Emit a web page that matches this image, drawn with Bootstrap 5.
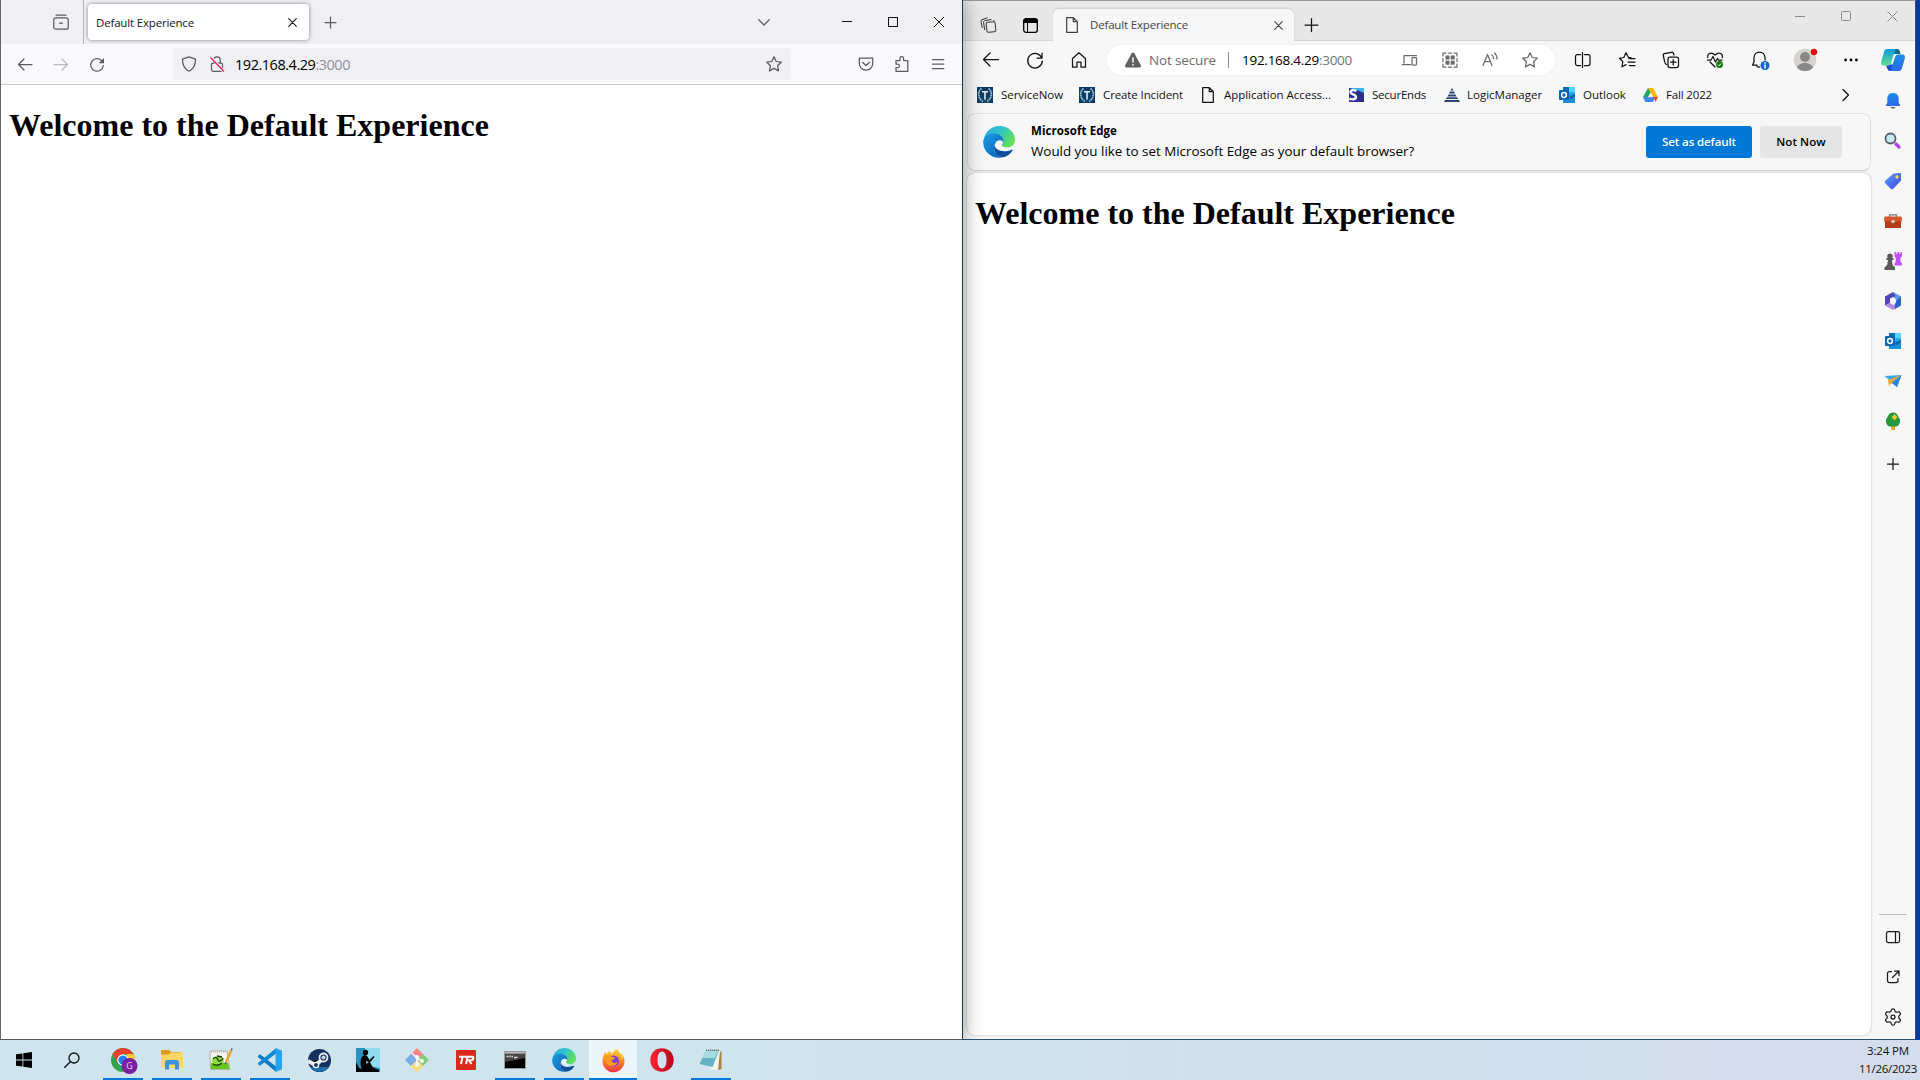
<!DOCTYPE html>
<html lang="en">
<head>
<meta charset="utf-8">
<title>Desktop</title>
<link href="https://cdn.jsdelivr.net/npm/bootstrap@5.3.0/dist/css/bootstrap.min.css" rel="stylesheet">
<style>
body{width:1920px;height:1080px;overflow:hidden;background:#0839a0;font-family:"Open Sans","Noto Sans",sans-serif;font-size:11.5px;line-height:16px;color:#111}
svg{display:block;flex:none;overflow:visible}
.ln{fill:none;stroke:currentColor;stroke-width:1.25;stroke-linecap:round;stroke-linejoin:round}
.tx{white-space:nowrap;flex:none}
.pic{width:16px;height:16px;flex:none}
.desk{height:1040px}
.doc-h{font:bold 32px/37px "Liberation Serif",serif;margin:22px 8px;color:#000;white-space:nowrap}
.t1{letter-spacing:-.172px}
.t2{letter-spacing:-.472px}
.t3{letter-spacing:-.147px}
.t4{letter-spacing:-.268px}
/* Firefox */
.fx{width:963px;border:1px solid #1f3a4d;border-left-color:#666;border-bottom-color:#555;border-top:0;background:#fff;position:relative;z-index:2;box-shadow:0 0 20px rgba(0,0,0,.4);color:#5b5b66}
.fx-tabs{height:44px;background:#f0eff4}
.fx-view{width:82px;padding:14px 0 0 52px}
.fx-sep{width:1px;height:44px;background:#b8b7bd}
.fx-tab{width:221px;height:36px;margin-left:4px;padding:1px 12px 0 8px;border-radius:4px;background:#fff;box-shadow:0 0 4px rgba(0,0,0,.45);color:#15141a}
.fx-new{margin-left:13px}
.fx-ctl{margin-left:auto;padding-right:18px;color:#15141a}
.fx-ctl .fx-list{margin:0 72px 0 0;color:#5b5b66}
.fx-bar{height:41px;background:#f9f9fb;border-bottom:1px solid #c9c9ce;padding:0 16px}
.fx-nav{gap:20px;width:156px}
.fx-url{width:617px;height:32px;background:#f0eff4;border-radius:4px;padding:0 8px;font-size:14.5px}
.fx-url .tx{padding-top:2px}
.fx-end{gap:20px;margin-left:auto}
.fade-fx{color:#8f8f98}
/* Edge */
.eg{width:953px;background:#f7f7f7;border-top:1px solid #999;border-right:1px solid #34506e;border-bottom:1px solid #2c5274}
.eg-tabs{height:40px;background:#e8e8e8;border-bottom:1px solid #d6d6d6}
.eg-tab{width:241px;height:32px;margin:8px 0 -1px 15px;padding:0 11px 0 13px;background:#f7f7f7;border-radius:6px 6px 0 0;box-shadow:0 -1px 2px rgba(0,0,0,.12);color:#444}
.eg-tab .tx{margin-left:12px}
.eg-lead{padding-left:17px;gap:26px;margin-top:8px;height:32px}
.eg-ctl{margin-left:auto;gap:36px;padding-right:17px;height:30px;color:#8a8a8a}
.eg-bar{height:38px}
.eg-nav{gap:28px;padding-left:20px;width:144px}
.eg-pill{width:448px;height:30px;border-radius:15px;background:#fff;padding:0 17px 0 18px;box-shadow:0 0 3px rgba(0,0,0,.06);color:#6b6b6b;font-size:13.5px}
.eg-pill .rule{width:1px;height:16px;background:#8a8a8a;margin:0 13px 0 12px}
.eg-acts{gap:28px;padding-left:20px}
.eg-me{margin:0 -1px 0 -4px}
.eg-marks{height:34px;padding:0 0 2px 14px}
.eg-marks .tx{margin-left:8px}
.b1{width:62px;letter-spacing:-.058px}
.b2{width:80px;letter-spacing:-.111px}
.eg-marks .b3{width:107px;letter-spacing:-.037px;margin-left:10px}
.b4{width:54px;letter-spacing:-.22px}
.eg-marks .b5{width:75px;margin-left:7px}
.b6{width:43px}
.b7{width:46px;letter-spacing:-.158px}
.m1{margin-left:16px}.m2{margin-left:19px}.m3,.m4{margin-left:18px}.m5,.m6{margin-left:17px}.m7{margin-left:130px}
.eg-body{width:904px;margin-left:4px}
.eg-ask{height:58px;width:904px;border:1px solid #e2e2e2;border-bottom-color:#d2d2d2;border-radius:8px;padding:0 28px 0 15px;box-shadow:0 1px 1px rgba(0,0,0,.05);color:#000}
.eg-q{margin:0 0 2px 16px;line-height:20px}
.q1{letter-spacing:.079px}
.q2{font-size:13.4px;letter-spacing:-.01px}
.eg-ask .btn{height:32px;border:0;border-radius:3px;padding:0;font-size:11.5px;font-weight:600;line-height:32px;display:flex;justify-content:center}
.btn-def,.btn-def:hover{width:106px;background:#0078d7;color:#fff;letter-spacing:-.1px}
.btn-no,.btn-no:hover{width:82px;background:#e5e5e5;color:#000;margin-left:8px;letter-spacing:.1px}
.eg-doc{height:862px;margin-top:2px;background:#fff;border-radius:8px;box-shadow:0 0 2px rgba(0,0,0,.3)}
.eg-side{width:43px;color:#1b1b1b}
.eg-side>svg{margin-bottom:16px}
.eg-side .cop{margin:7px 0 17px}
.eg-side .add{margin-top:9px}
.eg-side .gear{margin-bottom:10px}
.eg-side .brk{width:28px;height:1px;background:#bbb;margin-bottom:10px}
/* Taskbar */
.tb{height:40px;background:linear-gradient(90deg,#cfe4ec 0,#d0e4ee 40%,#d1dfeb 66%,#d4ddec 100%)}
.tb-first{width:48px}
.tb-apps{gap:1px;margin-left:3px}
.tb-app{width:48px;height:40px;position:relative}
.run::after{content:"";position:absolute;left:4px;right:4px;bottom:0;height:2px;background:#0078d7}
.act{background:#ecf5f9}
.act::after{left:0;right:0}
.clock{margin-left:auto;width:58px;margin-right:3px;line-height:18px;color:#111}
.c1{letter-spacing:-.143px}
.c2{letter-spacing:-.305px}
</style>
<script src="https://cdn.jsdelivr.net/npm/bootstrap@5.3.0/dist/js/bootstrap.bundle.min.js"></script>
</head>
<body>
<svg width="0" height="0" class="position-absolute">
<defs>
<linearGradient id="ga" x1="0" y1="0" x2="1" y2=".5"><stop offset="0" stop-color="#2aa7e0"/><stop offset=".5" stop-color="#2fc2d0"/><stop offset="1" stop-color="#5fe05a"/></linearGradient>
<linearGradient id="gb" x1="0" y1="0" x2="1" y2="1"><stop offset="0" stop-color="#1b9de2"/><stop offset="1" stop-color="#0a5fb8"/></linearGradient>
<linearGradient id="gc" x1="0" y1="0" x2="0" y2="1"><stop offset="0" stop-color="#1a8fe8"/><stop offset="1" stop-color="#2f66e8"/></linearGradient>
<linearGradient id="gd" x1="0" y1="0" x2="0" y2="1"><stop offset="0" stop-color="#0a9be0"/><stop offset="1" stop-color="#5fe08a"/></linearGradient>
<linearGradient id="ge" x1="0" y1="0" x2="0" y2="1"><stop offset="0" stop-color="#ffd43a"/><stop offset=".5" stop-color="#ff8a1e"/><stop offset="1" stop-color="#f2304c"/></linearGradient>
<linearGradient id="gf" x1="0" y1="0" x2="1" y2="1"><stop offset="0" stop-color="#55a6ff"/><stop offset="1" stop-color="#4340e0"/></linearGradient>
<linearGradient id="gg" x1="0" y1="0" x2="1" y2="0"><stop offset="0" stop-color="#ff2436"/><stop offset="1" stop-color="#b00a1c"/></linearGradient>
<symbol id="edge" viewBox="0 0 32 32">
<path fill="url(#ga)" d="M1 13C2.500 5 9 0 16.500 0 25 0 32 6 32 13.500c0 5-3.500 8-8 8-3.500 0-5.500-1.200-5.500-2.200 0-.8 1.500-1.300 1.500-3.800 0-4-4-7-9-7-4.500 0-8 2-10 4.500z"/>
<path fill="url(#gb)" d="M.2 17C-.2 11 5 7.500 11 7.500c5.500 0 9.500 3.300 9.500 8 0 2.500-1.500 3-1.500 3.800-1-4-6-3.500-7.500 0C9.500 25 14 30.500 20 31.300 10 33.500.8 27 .2 17z"/>
<path fill="#f4fafc" d="M12.500 17c1-3 6-4 7.700-.8-.3 1.800-1.500 2.300-1.500 3.100 0 .8 1 1.700 3 2.100-4 1.500-9.200-.5-9.200-4.400z"/>
<path fill="#0b4f9c" d="M11.500 18.500c-2 7 3 12.500 9 12.800 4-1 7-3.500 9-6.800.5-.8-.2-1.200-1-.8-8 3.500-17 .5-17-5.200z"/>
</symbol>
<symbol id="docs" viewBox="0 0 12 16"><path class="ln" d="M.7.700h6.600l4 4v10.600H.7zM7.300.700v4h4"/></symbol>
<symbol id="outl" viewBox="0 0 16 16"><path fill="#28a8ea" d="M4 0h12v9H4z"/><path fill="#0f6cbd" d="M4 0h6v5H4z"/><path fill="#50d9ff" d="M10 0h6v5h-6z"/><path fill="#1490df" d="M4 9l12-2v9H4z"/><path fill="#0a5ea8" d="M10 10l6-3v2l-4 3z"/><rect y="3" width="10" height="10" rx="1" fill="#0a64b5"/><circle cx="5" cy="8" r="2.400" fill="none" stroke="#fff" stroke-width="1.500"/></symbol>
<symbol id="crest" viewBox="0 0 16 16"><path fill="#083e66" d="M0 0h16v16H0z"/><path fill="#e4edf3" d="M5 4h6v1.500H8.800V12L8 13.500 7.200 12V5.500H5z"/><path fill="none" stroke="#a3bccb" stroke-width="1.700" stroke-dasharray="1.800 .5" d="M4.500 1.500C.5 4.500.5 11 6 14.500M11.500 1.500c4 3 4 9.500-1.500 13"/></symbol>
<symbol id="plus" viewBox="0 0 12 12"><path class="ln" d="M6 .5v11M.5 6h11"/></symbol>
<symbol id="cross" viewBox="0 0 10 10"><path class="ln" d="M.8.800l8.400 8.400M9.200.800L.8 9.200"/></symbol>
<symbol id="star" viewBox="0 0 16 16"><path class="ln" d="M8 .8l2.200 4.700 5 .7-3.600 3.500.9 5.200L8 12.400l-4.500 2.500.9-5.200L.8 6.200l5-.7z"/></symbol>
</defs></svg>

<main class="desk d-flex">
<section class="fx d-flex flex-column">
  <header class="fx-tabs d-flex align-items-center">
    <div class="fx-view align-self-start"><svg width="16" height="16" viewBox="0 0 16 16"><g class="ln" stroke-width="1.500"><path d="M3 1h10"/><rect x=".8" y="3.800" width="14.400" height="11.400" rx="2"/><path d="M6.500 9h3"/></g></svg></div>
    <div class="fx-sep"></div>
    <div class="fx-tab d-flex align-items-center justify-content-between"><span class="tx t1">Default Experience</span><svg width="9" height="9"><use href="#cross"/></svg></div>
    <svg class="fx-new" width="16" height="16" viewBox="0 0 16 16"><path class="ln" d="M8.500 3v11M3 8.500h11"/></svg>
    <div class="fx-ctl d-flex align-items-center">
      <svg class="fx-list" width="12" height="7" viewBox="0 0 12 7"><path class="ln" d="M.7.700L6 6 11.300.700"/></svg>
      <svg width="10" height="10"><path stroke="#15141a" d="M0 4.500h10"/></svg>
      <svg class="ms-4" width="22" height="10"><rect x="12.500" y=".5" width="9" height="9" fill="none" stroke="#15141a"/></svg>
      <svg class="ms-4" width="22" height="10"><path fill="none" stroke="#15141a" d="M12 0l10 10M22 0L12 10"/></svg>
    </div>
  </header>
  <nav class="fx-bar d-flex align-items-center">
    <div class="fx-nav d-flex">
      <svg width="16" height="16" viewBox="0 0 16 16"><path class="ln" d="M1.500 8.500H15M7 3L1.500 8.500 7 14"/></svg>
      <svg width="16" height="16" viewBox="0 0 16 16" opacity=".4"><path class="ln" d="M1 8.500h13.500M9 3l5.500 5.500L9 14"/></svg>
      <svg width="16" height="16" viewBox="0 0 16 16"><path class="ln" stroke-width="1.500" d="M13 5A6.300 6.300 0 1 0 14.300 9.500"/><path fill="currentColor" d="M15 2v5.300H9.700z"/></svg>
    </div>
    <div class="fx-url d-flex align-items-center">
      <svg width="16" height="16" viewBox="0 0 16 16"><path class="ln" stroke-width="1.500" d="M8 .8l6.500 2.400c0 5-1.500 9.600-6.500 12-5-2.400-6.500-7-6.500-12z"/></svg>
      <svg class="ms-2 me-2" width="22" height="16" viewBox="-4 0 22 16"><g class="ln"><rect x="2.500" y="7" width="11" height="8.300" rx="1.500"/><path d="M4.800 7V4a3.200 3.200 0 0 1 6.400 0v3"/></g><path stroke="#f0eff4" stroke-width="3" d="M2 1.500l13 14"/><path stroke="#e22850" stroke-width="1.300" d="M1.500 1.500l13.500 14"/></svg>
      <span class="tx t2 text-black">192.168.4.29<span class="fade-fx">:3000</span></span>
      <svg class="ms-auto" width="16" height="16"><use href="#star"/></svg>
    </div>
    <div class="fx-end d-flex">
      <svg width="16" height="16" viewBox="0 0 16 16"><path class="ln" d="M1.300 2.200h13.400v5.300a6.700 6.700 0 0 1-13.400 0zM4.500 6.300L8 9.500l3.500-3.200"/></svg>
      <svg width="16" height="16" viewBox="0 0 16 16"><path class="ln" d="M2 4.500h4V2.500a1.800 1.800 0 0 1 3.600 0v2h4.200v10.800H2v-3.600h1.600a1.800 1.800 0 0 0 0-3.600H2z"/></svg>
      <svg width="16" height="16" viewBox="0 0 16 16"><path class="ln" d="M2.500 3.500h11.300M2.500 8h11.300M2.500 12.500h11.300"/></svg>
    </div>
  </nav>
  <h1 class="doc-h">Welcome to the Default Experience</h1>
</section>

<section class="eg d-flex flex-column">
  <header class="eg-tabs d-flex align-items-start">
    <div class="eg-lead d-flex align-items-center">
      <svg width="17" height="16" viewBox="0 0 17 16"><g fill="none" stroke="#333" stroke-linejoin="round"><rect x="6.500" y="5" width="9" height="10" rx="1.500" transform="rotate(-6 11 10)"/><path d="M4.700 13L3.600 5.500c-.1-1 .3-1.600 1.200-1.900L11.500 2.500M2.300 11L1 4.500c-.1-1 .3-1.500 1-1.800L7.500.8M13.500 3l1 1"/></g></svg>
      <svg width="15" height="15" viewBox="0 0 15 15"><rect x=".7" y=".7" width="13.600" height="13.600" rx="2.200" fill="none" stroke="#000" stroke-width="1.300"/><path d="M.7 1h13.600v4H.7z"/><path stroke="#000" d="M4.500 4v10"/></svg>
    </div>
    <div class="eg-tab d-flex align-items-center">
      <svg width="12" height="16"><use href="#docs"/></svg>
      <span class="tx t1">Default Experience</span>
      <svg class="ms-auto" width="9" height="9"><use href="#cross"/></svg>
    </div>
    <svg class="ms-2 mt-3" width="18" height="16" viewBox="0 0 18 16"><path class="ln" d="M9.500 1.500v13M3 8h13"/></svg>
    <div class="eg-ctl d-flex align-items-center">
      <svg width="10" height="10"><path stroke="currentColor" d="M0 5.500h10"/></svg>
      <svg width="10" height="10"><rect x=".5" y=".5" width="9" height="9" rx="1" fill="none" stroke="currentColor"/></svg>
      <svg width="11" height="11"><path stroke="currentColor" d="M.5.500l10 10M10.500.500l-10 10"/></svg>
    </div>
  </header>
  <div class="d-flex flex-fill">
    <div class="eg-left">
      <nav class="eg-bar d-flex align-items-center">
        <div class="eg-nav d-flex">
          <svg width="16" height="16" viewBox="0 0 16 16"><path class="ln" d="M.5 7.500h15M7 1L.5 7.500 7 14"/></svg>
          <svg width="16" height="16" viewBox="0 0 16 16"><path class="ln" d="M14.800 6A7.300 7.300 0 1 0 15.300 9M15 1v5h-5"/></svg>
          <svg width="16" height="16" viewBox="0 0 16 16"><path class="ln" d="M1.500 6.500L8 .8l6.500 5.700v8.700H10V10H6v5.200H1.500z"/></svg>
        </div>
        <div class="eg-pill d-flex align-items-center">
          <svg width="16" height="16" viewBox="0 0 16 16"><path fill="#606060" d="M8 .5c.6 0 1 .3 1.300.8l6.500 12c.6 1.200 0 2.200-1.200 2.200H1.400C.2 15.500-.4 14.500.2 13.300l6.500-12C7 .8 7.400.5 8 .5z"/><path stroke="#fff" stroke-width="1.500" d="M8 5.500v5M8 12v1.600"/></svg>
          <span class="tx t3 ms-2">Not secure</span><span class="rule"></span>
          <span class="tx t4 text-black">192.168.4.29<span class="text-secondary">:3000</span></span>
          <svg class="ms-auto" width="16" height="16" viewBox="0 0 16 16"><path class="ln" d="M2 11V3.500h12.500M.2 12.500h8.500"/><rect class="ln" x="10" y="5.500" width="4.500" height="7.500" rx=".8"/></svg>
          <svg class="ms-4" width="16" height="16" viewBox="0 0 16 16"><g fill="currentColor"><rect x="3.500" y="3.500" width="4" height="4"/><rect x="8.700" y="3.500" width="4" height="4"/><rect x="3.500" y="8.700" width="4" height="4"/><rect x="8.700" y="8.700" width="4" height="4"/></g><path class="ln" d="M1 4V1h3M12 1h3v3M15 12v3h-3M4 15H1v-3M6.500 1h3M6.500 15h3M1 6.500v3M15 6.500v3"/></svg>
          <svg class="ms-4" width="16" height="16" viewBox="0 0 16 16"><path class="ln" d="M1 13.500L5.500 2.500l4.500 11M2.800 9.500h5.400M10 3c1.300 1 1.500 2.300 1.500 3.500M12.500 1C14.500 2.500 15 4.500 15 7"/></svg>
          <svg class="ms-4" width="16" height="16"><use href="#star"/></svg>
        </div>
        <div class="eg-acts d-flex align-items-center">
          <svg width="16" height="16" viewBox="0 0 16 16"><path class="ln" d="M5.500 2.500H2a2 2 0 0 0-1.500 2v7a2 2 0 0 0 1.500 2h3.500M9.500 2.500H13a2 2 0 0 1 2 2v7a2 2 0 0 1-2 2H9.500M7.500.5v15"/></svg>
          <svg width="16" height="16" viewBox="0 0 16 16"><path class="ln" d="M12 5.500H9.500L7 .8 4.800 5.500l-4.300.8L3.800 9.500 3 14.800l4-2.200M10 6.500h6M9 10h7M10.500 13.500H16"/></svg>
          <svg width="16" height="16" viewBox="0 0 16 16"><path class="ln" d="M3.500 12.500C2 12 1.800 11 1.500 9L.3 3.500c-.2-1 .2-1.600 1-1.800L8.500.3c1-.2 1.700.2 1.900 1L11 3"/><rect class="ln" x="5" y="5" width="10.500" height="10.500" rx="2"/><path class="ln" d="M10.200 7.500v5.500M7.500 10.200H13"/></svg>
          <svg width="16" height="16" viewBox="0 0 16 16"><path class="ln" d="M.8 5.500C.3 3 1.800 1 4 1c2 0 3 1 4 2 1-1 2-2 4-2 2.500 0 4 2 3.300 4.500M.5 8H4l2-3.500 2.500 5.500 2-3.500 1 1.500h3.500M3 10l5 5"/><circle cx="12.500" cy="12.500" r="3.500" fill="#107c10"/><path stroke="#fff" fill="none" d="M11 12.500l1.200 1.200 2-2.200"/></svg>
          <svg width="18" height="18" viewBox="0 0 18 18"><path class="ln" d="M6 14H1.500l1.500-3V6.500a5.500 5.500 0 0 1 11 0V9M5.500 14.500c.6 1.500 2 2 3 1.500"/><circle cx="14" cy="14.500" r="4.500" fill="#1267d8"/><path stroke="#fff" stroke-width="1.500" d="M14 13.500v4M14 11.200v1.500"/></svg>
          <svg class="eg-me" width="24" height="24" viewBox="0 0 24 24"><circle cx="12" cy="12" r="11.300" fill="#d5d3d0"/><circle cx="12" cy="9" r="5" fill="#8a8886"/><path fill="#8a8886" d="M4 19.500c2-6 14-6 16 0-4 4.800-12 4.800-16 0z"/><circle cx="21" cy="4" r="3.200" fill="#e8050a"/></svg>
          <svg width="14" height="4" viewBox="0 0 14 4"><circle cx="1.600" cy="2" r="1.400"/><circle cx="7" cy="2" r="1.400"/><circle cx="12.400" cy="2" r="1.400"/></svg>
        </div>
      </nav>
      <div class="eg-marks d-flex align-items-center">
        <svg class="pic"><use href="#crest"/></svg><span class="tx b1">ServiceNow</span>
        <svg class="pic m1"><use href="#crest"/></svg><span class="tx b2">Create Incident</span>
        <svg class="m2" width="12" height="16"><use href="#docs"/></svg><span class="tx b3">Application Access...</span>
        <svg class="m3" width="15" height="14" viewBox="0 0 15 14"><path fill="#2e2d91" d="M0 0h15v14H0z"/><path fill="#3bb5ea" d="M0 0h15v5L8 2z"/><path fill="none" stroke="#fff" stroke-width="2.400" d="M7.500 3C5 1.500 1.500 2 1.500 4.200S7 6.500 7 9 3 12 .3 10.500"/></svg><span class="tx b4">SecurEnds</span>
        <svg class="m4" width="16" height="14" viewBox="0 0 16 14"><path fill="#2b4478" d="M8 0l1.500 2.500h-3zM6 3.500h4l1 2H5zM4.500 6.500h7l1 2h-9zM2.800 9.300h10.400l.9 1.700H1.900zM1 12h14l1 2H0z"/></svg><span class="tx b5">LogicManager</span>
        <svg class="pic m5"><use href="#outl"/></svg><span class="tx b6">Outlook</span>
        <svg class="m6" width="15" height="14" viewBox="0 0 15 14"><path fill="#1fa463" d="M5 0h2.500L9 4 3 14 0 9z"/><path fill="#ffba00" d="M5 0h5l5 9h-5z"/><path fill="#4285f4" d="M0 9h12l-2 5H2.500z"/><path fill="#ea4335" d="M10.500 9H15l-2.500 5z"/><path fill="#f7f7f7" d="M7.500 4.500l2.600 4.700H4.800z"/></svg><span class="tx b7">Fall 2022</span>
        <svg class="m7" width="7" height="12" viewBox="0 0 7 12"><path class="ln" d="M1 .5L6.500 6 1 11.500"/></svg>
      </div>
      <div class="eg-body">
        <div class="eg-ask d-flex align-items-center">
          <svg width="32" height="32"><use href="#edge"/></svg>
          <div class="eg-q"><div class="tx fw-bold"><span class="q1">Microsoft Edge</span></div><div class="tx"><span class="q2">Would you like to set Microsoft Edge as your default browser?</span></div></div>
          <button class="btn btn-def ms-auto">Set as default</button>
          <button class="btn btn-no">Not Now</button>
        </div>
        <div class="eg-doc d-flex"><h1 class="doc-h">Welcome to the Default Experience</h1></div>
      </div>
    </div>
    <aside class="eg-side d-flex flex-column align-items-center">
      <svg class="cop" width="24" height="24" viewBox="0 0 24 24"><path fill="#0b6a96" d="M11 1h5c2 0 3 1.500 3.500 5H13z"/><path fill="url(#gd)" d="M6 1h8.500L10.500 14c-.8 2.500-2 3.500-4 3.500H3c-3 0-3.500-2-2.500-5L3 4c.6-2 1.500-3 3-3z"/><path fill="#1f48d8" d="M5 17.500c3 0 4.500-.5 5.500-3.500L14 15l-2 8H9c-2 0-2.500-2-4-5.500z"/><path fill="url(#gc)" d="M18 23H9.500L13.500 10c.8-2.500 2-3.500 4-3.500H21c3 0 3.500 2 2.500 5L21 20c-.6 2-1.500 3-3 3z"/><path fill="#f7fbff" d="M12.800 7.500h2.400c-1 .7-1.500 1.800-2 3.500l-1.700 5.500H9c.7-.6 1.200-1.500 1.500-2.500z"/></svg>
      <svg width="24" height="24" viewBox="-4 -4 24 24"><path fill="url(#gc)" d="M1 12l1.300-2V6C2.300 2 4.500 0 8 0s5.700 2 5.700 6v4l1.300 2v1H1z"/><path fill="#5a6170" d="M5.500 14h5c-.5 2-4.500 2-5 0z"/></svg>
      <svg width="24" height="24" viewBox="-4 -4 24 24"><path stroke="#b23df2" stroke-width="3.200" stroke-linecap="round" d="M11 11l3 3"/><circle cx="5.500" cy="5.500" r="5" fill="#c9e8fb" stroke="#5c6068" stroke-width="1.800"/></svg>
      <svg width="24" height="24" viewBox="-4 -4 24 24"><path fill="url(#gf)" d="M8.500.5L16 0v7.500L8.500 15.500c-1 1-2 1-3 0l-5-5c-1-1-1-2 0-3z"/><circle cx="12" cy="4" r="1.700" fill="#ffd84a"/></svg>
      <svg width="24" height="24" viewBox="-4 -4 24 24"><path fill="none" stroke="#777" stroke-width="1.200" d="M4.500 4V1.800h7V4"/><rect x="-.8" y="3.500" width="17.600" height="5.500" rx="1" fill="#d8562b"/><path fill="#b63c14" d="M0 8.500h16V15H0z"/><circle cx="8" cy="8.500" r="1.800" fill="#ccc"/></svg>
      <svg width="24" height="24" viewBox="-4 -4 24 24"><path fill="#c151f5" d="M9.500-1h1.700v1.700h1.300V-1h1.700v1.700h1.300V-1H17v4.500l-1.500 1v4l1.500 2v2H9.500v-2l1.200-2v-4l-1.200-1z"/><path fill="#5a5a5a" d="M5 .5a2.700 2.700 0 0 1 2 4.600h1.500v2H7L7.600 12l2.400 2.500V17H-.5v-2.500L2.200 12l.8-4.900H1.500v-2H3A2.700 2.700 0 0 1 5 .5z"/></svg>
      <svg width="24" height="24" viewBox="-4 -4 24 24"><path fill="#5a9be8" d="M8-1l8 4.300V10l-5.500-3L8 4z"/><path fill="#5345b5" d="M8-1L0 3.500v9L5 10V5.500L10.500 3z"/><path fill="#b48adf" d="M0 12.500L8 17l3.500-2v-4.500L8 12 5 10z"/><path fill="#2b64c8" d="M16 3.500v9L10 16v-5.500l1.500-3z"/><circle cx="8" cy="7.800" r="3" fill="#f7f7f7"/></svg>
      <svg width="24" height="24" viewBox="-4 -4 24 24"><use href="#outl" width="16" height="16"/></svg>
      <svg width="24" height="24" viewBox="-4 -4 24 24"><path fill="#37a7f2" d="M-.5 3L16.500 2 12 14 6.500 9z"/><path fill="#f4a52c" d="M16.500 2L3 7l1 6 2.500-3z"/><path fill="#2f84e6" d="M16.500 2L12 14 6.500 10z"/></svg>
      <svg width="24" height="24" viewBox="-4 -4 24 24"><path fill="#f0a024" d="M6.200 12h3.800v5H6.200z"/><path fill="#23983f" d="M8-.5c3 0 4.500 2 5.500 4.500 2 2 2 5 .8 7-.6 1.500-1.800 2.500-3.300 2.500H5c-1.500 0-2.700-1-3.300-2.500-1.200-2-1.200-5 .8-7C3.500 1.500 5-.5 8-.5z"/><path fill="#fbc72d" d="M9.500 1.200l3 3-3 3-3-3z"/></svg>
      <svg class="add" width="12" height="12"><use href="#plus"/></svg>
      <div class="brk mt-auto"></div>
      <svg width="24" height="24" viewBox="-4 -4 24 24"><rect class="ln" x="1.500" y="2.500" width="13" height="11" rx="1.800"/><path class="ln" d="M10.500 2.500v11"/></svg>
      <svg width="24" height="24" viewBox="-4 -4 24 24"><path class="ln" d="M6.500 2.500h-2a2 2 0 0 0-2 2v7a2 2 0 0 0 2 2h6.500a2 2 0 0 0 2-2v-2M9.500 2H14v4.500M14 2L7.500 8.500"/></svg>
      <svg class="gear" width="24" height="24" viewBox="-4 -4 24 24"><circle class="ln" cx="8" cy="8" r="2"/><path class="ln" d="M6.200 1.500C6.500-.8 9.500-.8 9.800 1.500c.2 1.400 1.500 2 2.800 1.500 2.200-.8 3.700 1.800 2 3.300-1.200.9-1.200 2.500 0 3.400 1.700 1.500.2 4.100-2 3.300-1.300-.5-2.600.1-2.800 1.500-.3 2.300-3.300 2.300-3.600 0-.2-1.400-1.500-2-2.800-1.500-2.200.8-3.700-1.800-2-3.300 1.200-.9 1.200-2.500 0-3.400-1.700-1.500-.2-4.100 2-3.300 1.300.5 2.600-.1 2.800-1.500z"/></svg>
    </aside>
  </div>
</section>
</main>

<footer class="tb d-flex align-items-center position-relative z-3">
  <div class="tb-first d-flex justify-content-center"><svg width="16" height="16" viewBox="0 0 16 16"><path d="M0 2.300L6.500 1.400V7.600H0zM7.300 1.300L16 0v7.600H7.300zM0 8.400h6.500v6.200L0 13.700zM7.300 8.400H16V16l-8.700-1.300z"/></svg></div>
  <div class="tb-first d-flex justify-content-center"><svg width="16" height="16" viewBox="0 0 16 16"><circle cx="10" cy="6" r="5" fill="none" stroke="#111" stroke-width="1.300"/><path stroke="#111" stroke-width="1.300" d="M6.500 9.500L.3 15.700"/></svg></div>
  <div class="tb-apps d-flex">
    <div class="tb-app run d-flex align-items-center justify-content-center"><svg width="24" height="24" viewBox="0 0 24 24"><circle cx="12" cy="12" r="12" fill="#34a350"/><path fill="#e8402f" d="M1.600 6A12 12 0 0 1 22.400 6H12L7 15z"/><path fill="#fcc934" d="M22.400 6A12 12 0 0 1 12 24l5-9-1-9z"/><circle cx="12" cy="12" r="5.800" fill="#fff"/><circle cx="12" cy="12" r="4.600" fill="#2a7de9"/><circle cx="18.500" cy="18" r="8" fill="#7a1fa2"/><text x="18.500" y="21.200" font-size="9" text-anchor="middle" fill="#e8d0f0">G</text></svg></div>
    <div class="tb-app run d-flex align-items-center justify-content-center"><svg width="22" height="20" viewBox="0 0 22 20"><path fill="#d89a13" d="M0 1.500C0 .6.600 0 1.500 0h6.500l2 2H20v4H0z"/><path fill="#ffd766" d="M0 4.500h8l2-2h10.500c.9 0 1.500.6 1.500 1.500V18H0z"/><path fill="#3e94dc" d="M4 19.500v-7c0-1.500 1-2.500 2.500-2.500h9c1.500 0 2.500 1 2.500 2.500v7h-4V14.500H8v5z"/></svg></div>
    <div class="tb-app run d-flex align-items-center justify-content-center"><svg width="24" height="24" viewBox="0 0 24 24"><path fill="#f4f4ee" stroke="#b5b5a8" d="M1 3h17l3 18.500H1.500z"/><path fill="#64c71c" d="M2 15h17.500l.8 6H2z"/><path stroke="#aaa" stroke-dasharray="1 1" d="M2 4h16"/><ellipse cx="9" cy="13" rx="6" ry="4.500" fill="#8fdc3c"/><path fill="none" stroke="#1b3b0a" stroke-width="1.300" d="M4 11c2-3 5-1 5 1s4 1 5-2M4 16c3 2 7 1 9-1M8 8l5 1"/><path stroke="#e8a72c" stroke-width="2.400" d="M22.500 2L17 14"/><path stroke="#555" stroke-width="1.500" d="M17 14l-.8 2M22.500 2l.6-1.500"/></svg></div>
    <div class="tb-app run d-flex align-items-center justify-content-center"><svg width="24" height="24" viewBox="0 0 24 24"><path fill="#0b78c4" d="M0 8l2-1.700L18 18.500v5.200L.3 9.300C0 9 0 8.300 0 8z"/><path fill="#1287d6" d="M0 16l2 1.700L18 5.500V.3L.3 14.700c-.3.300-.3 1 0 1.300z"/><path fill="#28a3f0" d="M17.500 0L24 2.800v18.400L17.500 24z"/></svg></div>
    <div class="tb-app d-flex align-items-center justify-content-center"><svg width="23" height="23" viewBox="0 0 23 23"><circle cx="11.500" cy="11.500" r="11.500" fill="#14305f"/><path fill="#1d6fa8" d="M2 18c5 6.500 14 6.500 19 0z"/><path stroke="#e6edf3" stroke-width="4" d="M0 12l7.500 4 6-5"/><circle cx="15.500" cy="8.500" r="4" fill="#14305f" stroke="#e6edf3" stroke-width="1.800"/><circle cx="15.500" cy="8.500" r="2" fill="#c8d4de"/><circle cx="8" cy="16" r="2.600" fill="#14305f" stroke="#fff" stroke-width="1.300"/></svg></div>
    <div class="tb-app d-flex align-items-center justify-content-center"><svg width="24" height="24" viewBox="0 0 24 24"><path fill="#2b93bf" d="M0 0h24v24H0z"/><path fill="#8fdcf0" d="M9 0h15v20L9 17z"/><circle cx="9.500" cy="4.500" r="2.700"/><path d="M0 14l3 6 3 1c-2-4-2-9 0-12 1-2 4-2.500 5.500-.5l2 3.500 4-4 1 1-4.500 5.500-4-1.500.5 3 3-2.500 3.500 6 6 2.500v2H0z"/></svg></div>
    <div class="tb-app d-flex align-items-center justify-content-center"><svg width="24" height="24" viewBox="0 0 24 24"><path fill="#f58484" d="M12 0l6 6-6 6-6-6z"/><path fill="#76ace8" d="M6 6l6 6-6 6-6-6z"/><path fill="#82ca78" d="M18 6l6 6-6 6-6-6z"/><path fill="#fbdc74" d="M12 12l6 6-6 6-6-6z"/><path fill="none" stroke="#f6f8fa" stroke-width="1.500" d="M7 5l5 5v8M12 10l5 3"/><g fill="#f6f8fa"><circle cx="12" cy="9" r="2"/><circle cx="12" cy="17" r="2"/><circle cx="17" cy="13" r="2"/></g></svg></div>
    <div class="tb-app d-flex align-items-center justify-content-center"><svg width="20" height="20" viewBox="0 0 20 20"><rect width="20" height="20" rx="1" fill="#da2a20"/><path fill="none" stroke="#fff" stroke-width="2" d="M3 6.700h13.500c1.500 0 1 3.500-1 3.500H11.500M6.500 7l-1.500 7M11.500 7L10 14M13 10.500l2.500 3.500"/></svg></div>
    <div class="tb-app run d-flex align-items-center justify-content-center"><svg width="22" height="18" viewBox="0 0 22 18"><path fill="#000" stroke="#9a9a9a" d="M.5.500h21v17H.5z"/><path fill="#b8b8b8" d="M1 1h20v1.800H1z"/><path fill="#444" d="M1 3h20v4L1 11z"/><path stroke="#ddd" stroke-width="1.300" d="M2.500 5.500h2M6 4.500v2M7.500 5.500h1.500M10 6.500h3.500"/></svg></div>
    <div class="tb-app run d-flex align-items-center justify-content-center"><svg width="24" height="24"><use href="#edge"/></svg></div>
    <div class="tb-app run act d-flex align-items-center justify-content-center"><svg width="23" height="23" viewBox="0 0 23 23"><path fill="url(#ge)" d="M14 0c2 1 3 2.500 3.500 4 2-.5 5 3.500 5 8A11 11 0 0 1 .5 12.500C.5 8 2 6 2.500 3l2.500 2 2.500-3.500L9 4.500c2 0 3-2.500 5-4.500z"/><circle cx="11.500" cy="12" r="5.500" fill="#7542e5"/><path fill="#ff9a1f" d="M3 7c3-2 6-1 7 1l3 .5c0 2-3 2-3.500 3.500 1 2.500 4.500 2 6 .500-.5 4-5.500 6-9 3.500S3 9 3 7z"/><path fill="#ffd23a" d="M14 0c4 3 4 7 6 11 1.500-3 0-6-2.500-7C16.500 2 15.500 1 14 0z"/></svg></div>
    <div class="tb-app d-flex align-items-center justify-content-center"><svg width="24" height="24" viewBox="0 0 24 24"><path fill="url(#gg)" fill-rule="evenodd" d="M12 .3c7 0 11.700 5 11.700 11.700S19 23.700 12 23.700.3 19 .3 12 5 .3 12 .3zM12 3.500C9 3.500 7.500 7.500 7.500 12S9 20.500 12 20.500s4.500-4 4.500-8.500-1.500-8.500-4.500-8.500z"/></svg></div>
    <div class="tb-app run d-flex align-items-center justify-content-center"><svg width="24" height="22" viewBox="0 0 24 22"><path fill="#a5813c" d="M20 2l2.500 1v17l-3.500 1z"/><path fill="#f2f2ee" d="M19 1l2 1-2 19.500-8-1.500z"/><path fill="#62b4c6" d="M7 1.500h13L13.500 18 .5 15z"/><path fill="#a6dbe3" d="M7 2h12l-3 7H3.500z"/><path stroke="#777" stroke-width="1.600" stroke-dasharray="1.300 .7" d="M7 1.300h13"/></svg></div>
  </div>
  <div class="clock d-flex flex-column align-items-center"><span class="tx c1">3:24 PM</span><span class="tx c2">11/26/2023</span></div>
</footer>
</body>
</html>
